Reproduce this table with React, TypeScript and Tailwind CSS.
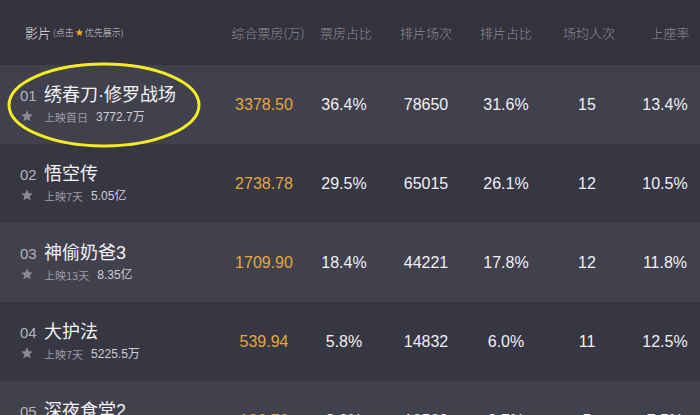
const movies = [
  { rank: "01", name: "绣春刀·修罗战场", days: "上映首日", total: "3772.7万", box: "3378.50", boxRate: "36.4%", shows: "78650", showRate: "31.6%", avg: "15", seat: "13.4%" },
  { rank: "02", name: "悟空传", days: "上映7天", total: "5.05亿", box: "2738.78", boxRate: "29.5%", shows: "65015", showRate: "26.1%", avg: "12", seat: "10.5%" },
  { rank: "03", name: "神偷奶爸3", days: "上映13天", total: "8.35亿", box: "1709.90", boxRate: "18.4%", shows: "44221", showRate: "17.8%", avg: "12", seat: "11.8%" },
  { rank: "04", name: "大护法", days: "上映7天", total: "5225.5万", box: "539.94", boxRate: "5.8%", shows: "14832", showRate: "6.0%", avg: "11", seat: "12.5%" },
  { rank: "05", name: "深夜食堂2", days: "上映3天", total: "1053.6万", box: "186.76", boxRate: "2.0%", shows: "10508", showRate: "2.7%", avg: "5", seat: "7.5%" },
];

const cols = "grid grid-cols-[226px_80px_80px_80px_80px_80px_74px] items-center";

const Star = ({ className }: { className?: string }) => (
  <svg viewBox="0 0 24 24" className={className} fill="currentColor">
    <path d="M12 2.2l2.9 6.6 7.1.6-5.4 4.7 1.6 7-6.2-3.7-6.2 3.7 1.6-7L2 9.4l7.1-.6z" />
  </svg>
);

export default function App() {
  return (
    <div className="relative w-[700px] h-[415px] overflow-hidden bg-[#33323d] font-['Liberation_Sans','Noto_Sans_CJK_SC',sans-serif]">
      <div className={`${cols} h-[65px] text-[13px] text-[#8e8d97] font-['Noto_Sans_CJK_SC',sans-serif] font-light`}>
        <div className="pl-[25px] flex items-center">
          <span className="text-[#e6e6ea] text-[13px]">影片</span>
          <span className="ml-[2px] text-[9px] text-[#d0d0d6] flex items-center">
            (点击
            <Star className="w-[9px] h-[9px] text-[#f4a624] mx-[1px]" />
            优先展示)
          </span>
        </div>
        <div className="text-center pl-[4px]">综合票房(万)</div>
        <div className="text-center">票房占比</div>
        <div className="text-center">排片场次</div>
        <div className="text-center">排片占比</div>
        <div className="text-center pl-[6px]">场均人次</div>
        <div className="text-center pl-[14px]">上座率</div>
      </div>
      {movies.map((m, i) => (
        <div
          key={m.rank}
          className={`${cols} h-[79px] ${i % 2 === 0 ? "bg-[#41404d]" : "bg-[#373643]"}`}
        >
          <div className="pl-[20px] flex flex-col">
            <div className="flex items-baseline">
              <span className="w-[24px] text-[15px] text-[#b4b3bc]">{m.rank}</span>
              <span className="text-[18px] leading-[24px] text-[#f2f2f4]">{m.name}</span>
            </div>
            <div className="flex items-center">
              <Star className="w-[14px] h-[14px] text-[#8b8a94] mr-[10px] -mt-[2px]" />
              <span className="text-[11px] text-[#9c9ba5] font-['Noto_Sans_CJK_SC',sans-serif]">{m.days}</span>
              <span className="ml-[8px] text-[12px] text-[#cfced5]">{m.total}</span>
            </div>
          </div>
          <div className="text-center text-[16px] text-[#e3a83b] pr-[4px]">{m.box}</div>
          <div className="text-center text-[16px] text-[#f0f0f2] pr-[4px]">{m.boxRate}</div>
          <div className="text-center text-[16px] text-[#f0f0f2]">{m.shows}</div>
          <div className="text-center text-[16px] text-[#f0f0f2]">{m.showRate}</div>
          <div className="text-center text-[16px] text-[#f0f0f2] pl-[2px]">{m.avg}</div>
          <div className="text-center text-[16px] text-[#f0f0f2] pl-[4px]">{m.seat}</div>
        </div>
      ))}
      <svg className="absolute left-0 top-0 pointer-events-none" width="700" height="415">
        <ellipse cx="104" cy="105" rx="95" ry="41" fill="none" stroke="#f2ec24" strokeWidth="3" />
      </svg>
    </div>
  );
}
